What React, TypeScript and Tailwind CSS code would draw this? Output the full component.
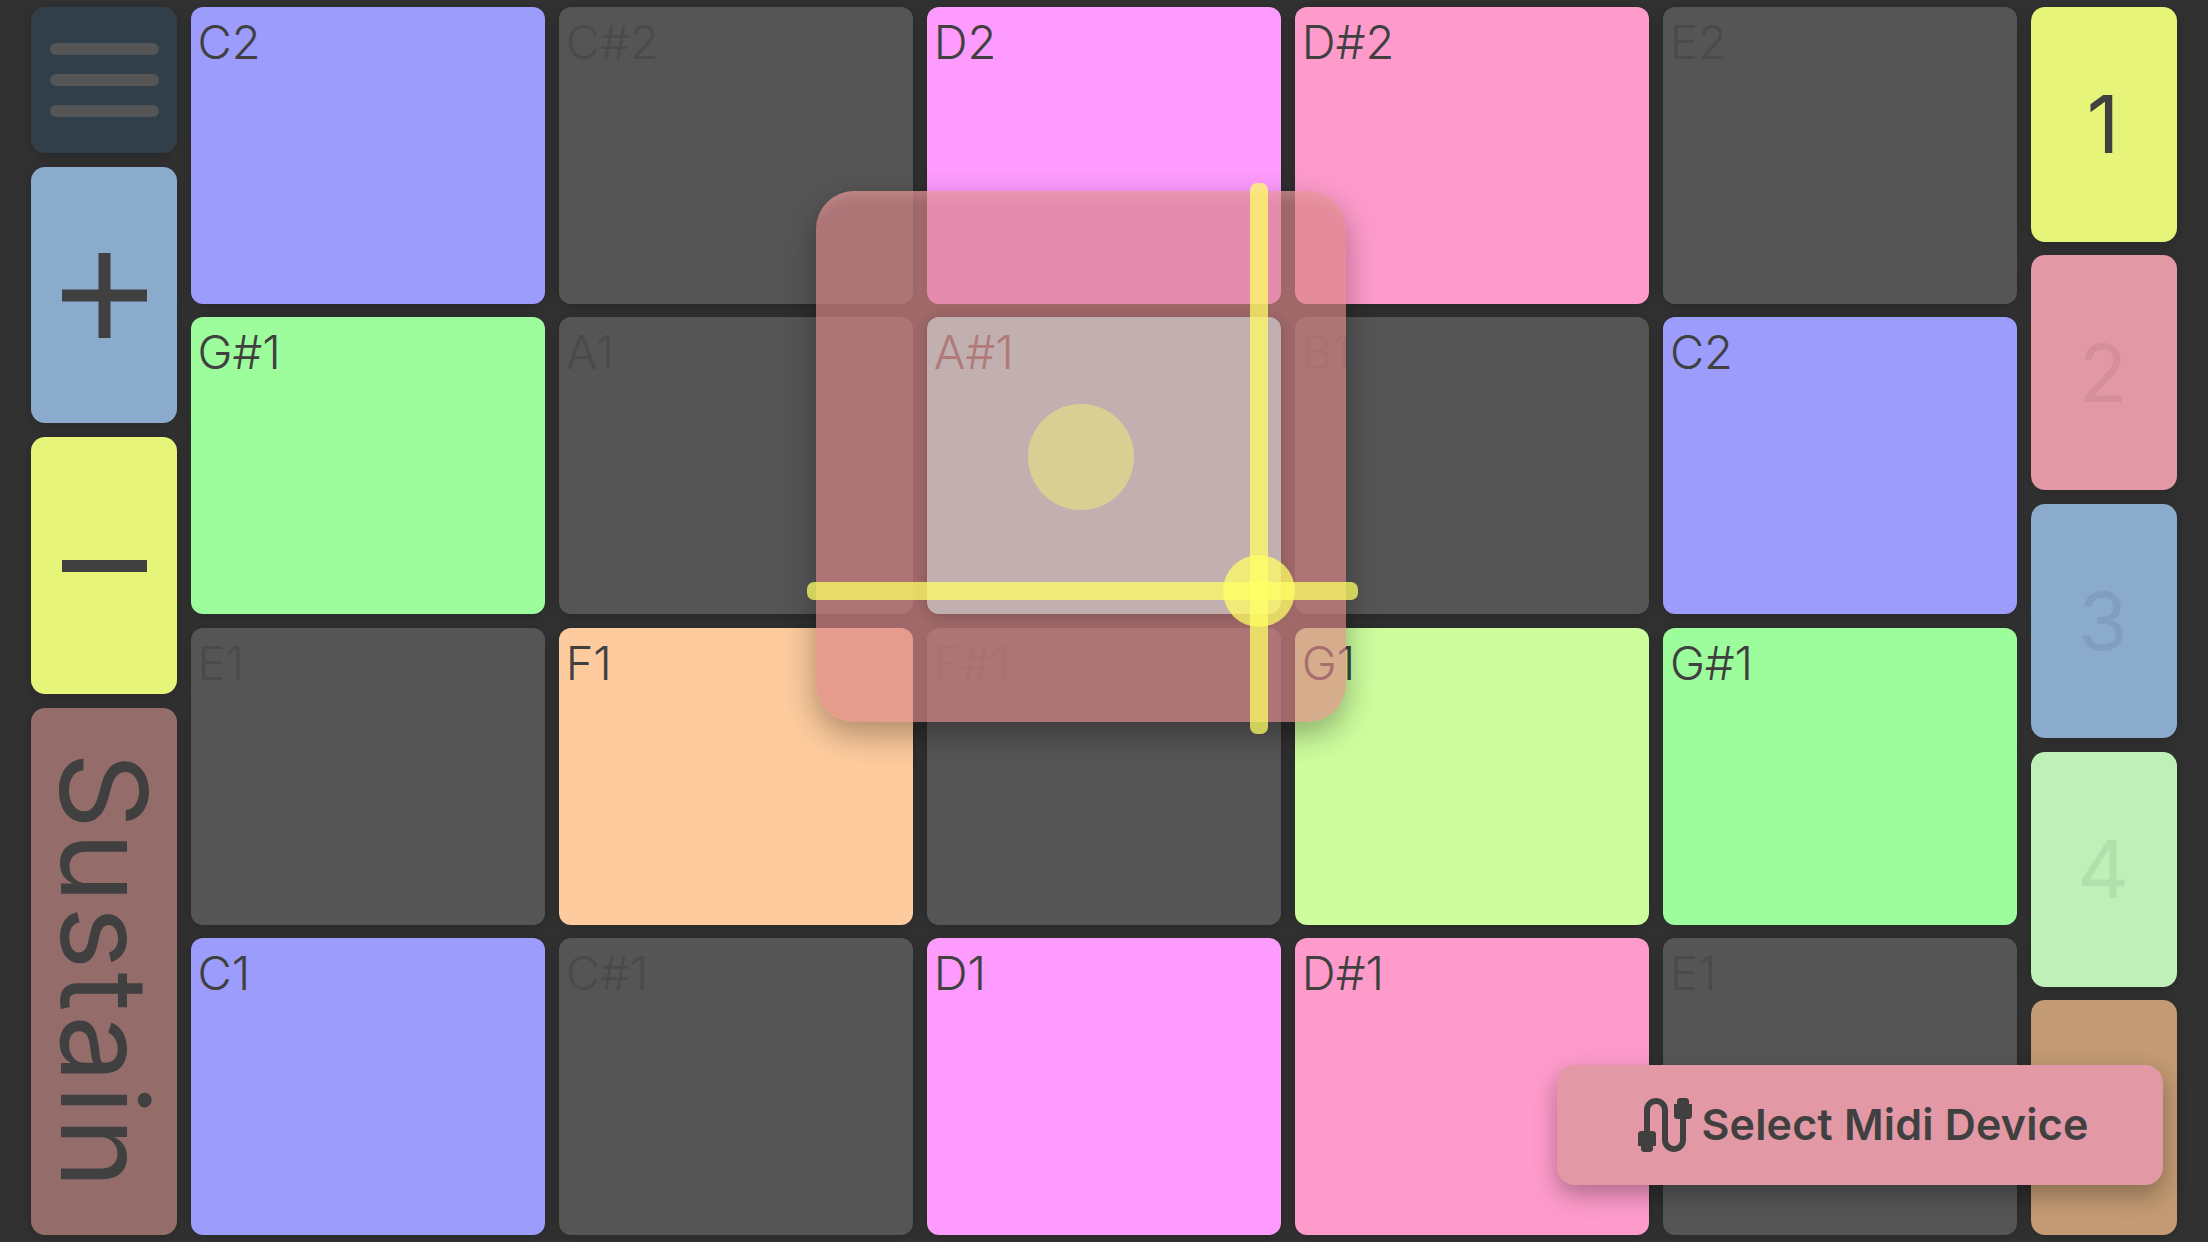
import React from 'react';
import { MdCable } from 'react-icons/md';

const FONT = "font-['Inter','Noto_Sans',sans-serif]";
const PAD_SHADOW = 'shadow-[0_2px_14px_rgba(0,0,0,0.22)]';

const TONES: Record<string, string> = {
  blue: 'bg-[#9c9cfc] text-[#404040]',
  dark: 'bg-[#555555] text-[#4a4a4a]',
  magenta: 'bg-[#fe9bfe] text-[#404040]',
  pink: 'bg-[#fe9bcb] text-[#404040]',
  green: 'bg-[#9dfd9d] text-[#404040]',
  peach: 'bg-[#fdcb9d] text-[#404040]',
  lime: 'bg-[#cdfd9d] text-[#404040]',
  active: 'relative z-20 bg-[#c2b0b0] text-[#b07a7a]',
};

const PADS: [string, string][] = [
  ['C2', 'blue'], ['C#2', 'dark'], ['D2', 'magenta'], ['D#2', 'pink'], ['E2', 'dark'],
  ['G#1', 'green'], ['A1', 'dark'], ['A#1', 'active'], ['B1', 'dark'], ['C2', 'blue'],
  ['E1', 'dark'], ['F1', 'peach'], ['F#1', 'dark'], ['G1', 'lime'], ['G#1', 'green'],
  ['C1', 'blue'], ['C#1', 'dark'], ['D1', 'magenta'], ['D#1', 'pink'], ['E1', 'dark'],
];

// the fifth channel's number sits behind the midi button, so it is left out
const CHANNELS: [string, string][] = [
  ['1', 'bg-[#e6f57a] text-[#404040]'],
  ['2', 'bg-[#e299a5] text-[#d48f9b]'],
  ['3', 'bg-[#8aabcc] text-[#809fbe]'],
  ['4', 'bg-[#bff0b8] text-[#b2e0ac]'],
  ['', 'bg-[#c29a73] text-[#b5906c]'],
];

export default function App() {
  return (
    <div className={`relative w-[2208px] h-[1242px] overflow-hidden bg-[#323232] flex gap-[13.6px] px-[31px] py-[7px] ${FONT}`}>
      {/* Left controls */}
      <div className="w-[146px] flex flex-col gap-[14px]">
        <div className={`h-[146px] shrink-0 rounded-[14px] bg-[#303f4a] flex flex-col items-center justify-center gap-[19px] ${PAD_SHADOW}`}>
          <div className="w-[109px] h-[12px] rounded-full bg-[#555555]" />
          <div className="w-[109px] h-[12px] rounded-full bg-[#555555]" />
          <div className="w-[109px] h-[12px] rounded-full bg-[#555555]" />
        </div>
        <div className={`h-[256px] shrink-0 rounded-[14px] bg-[#8aabcc] flex items-center justify-center ${PAD_SHADOW}`}>
          <svg width="85" height="85" viewBox="0 0 85 85" fill="#404040">
            <rect x="36.5" y="0" width="12" height="85" />
            <rect x="0" y="36.5" width="85" height="12" />
          </svg>
        </div>
        <div className={`h-[257px] shrink-0 rounded-[14px] bg-[#e6f57a] flex items-center justify-center ${PAD_SHADOW}`}>
          <svg width="85" height="14" viewBox="0 0 85 14" fill="#404040">
            <rect x="0" y="1" width="85" height="12" />
          </svg>
        </div>
        <div className={`flex-1 rounded-[14px] bg-[#946d6b] flex items-center justify-center text-[#404040] ${PAD_SHADOW}`}>
          <span className="[writing-mode:vertical-rl] text-[120px] leading-none tracking-[3px]">Sustain</span>
        </div>
      </div>

      {/* Note pads */}
      <div className="flex-1 grid grid-cols-5 grid-rows-4 gap-[13.6px]">
        {PADS.map(([note, tone], i) => (
          <div key={i} className={`rounded-[12px] pl-[7px] pt-[7px] text-[47px] font-light leading-[56px] ${TONES[tone]} ${PAD_SHADOW}`}>
            {note}
          </div>
        ))}
      </div>

      {/* Channel buttons */}
      <div className="w-[146px] flex flex-col gap-[13.6px]">
        {CHANNELS.map(([n, tone], i) => (
          <div key={i} className={`flex-1 rounded-[14px] flex items-center justify-center text-[80px] leading-none pr-[2px] ${tone} ${PAD_SHADOW}`}>
            {n}
          </div>
        ))}
      </div>

      {/* XY control over the pads */}
      <div className="absolute z-10 left-[816px] top-[191px] w-[530px] h-[531px] rounded-[38px] bg-[#d88585]/[0.67] shadow-[0_12px_32px_rgba(0,0,0,0.32),inset_0_16px_14px_-12px_rgba(255,190,200,0.3)]" />
      <div className="absolute z-30 left-[1028px] top-[404px] w-[106px] h-[106px] rounded-full bg-[#ffff66]/40" />
      <div className="absolute z-30 left-[1250px] top-[183px] w-[18px] h-[551px] rounded-[7px] bg-[#ffff66]/75" />
      <div className="absolute z-30 left-[807px] top-[582px] w-[551px] h-[18px] rounded-[7px] bg-[#ffff66]/75" />
      <div className="absolute z-30 left-[1223px] top-[555px] w-[72px] h-[72px] rounded-full bg-[#ffff66]/75" />

      {/* Midi device button */}
      <div className="absolute z-40 left-[1557px] top-[1065px] w-[606px] h-[120px] rounded-[18px] bg-[#e299a5] flex items-center justify-center text-[#404040] pr-[2px] shadow-[0_10px_24px_rgba(0,0,0,0.3)]">
        <MdCable size={72} />
        <span className="text-[43px] font-semibold leading-none tracking-[0.2px] pb-[2px]">Select Midi Device</span>
      </div>
    </div>
  );
}
